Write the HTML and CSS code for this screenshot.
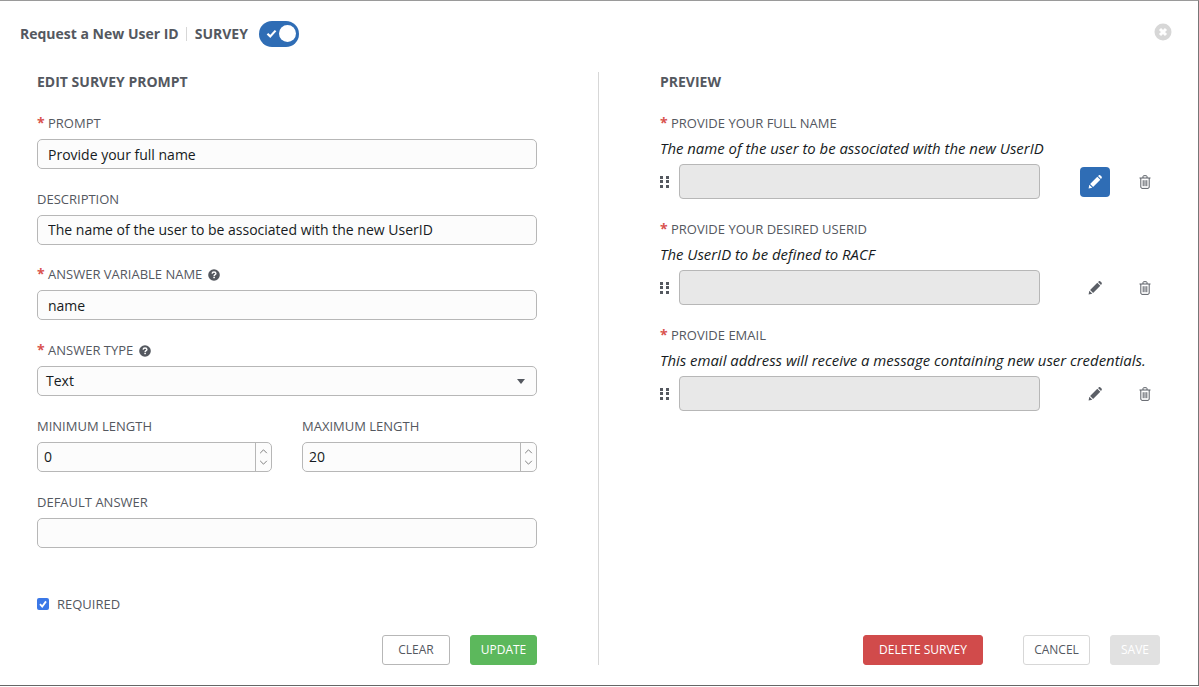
FILE: index.html
```html
<!DOCTYPE html>
<html lang="en">
<head>
  <meta charset="UTF-8" />
  <title>Request a New User ID | Survey</title>
  <link rel="stylesheet" href="styles.css">
</head>
<body>
  <div class="modal">
    <header class="modal-head">
      <span class="modal-title">Request a New User ID</span>
      <span class="title-sep"></span>
      <span class="modal-title">SURVEY</span>
      <span class="toggle">
        <svg class="toggle-check" viewBox="0 0 12 10"><path d="M1.5 5.2 4.6 8.2 10.5 1.8" fill="none" stroke="#fff" stroke-width="2.4"/></svg>
        <span class="toggle-knob"></span>
      </span>
      <svg class="close-icon" viewBox="0 0 18 18">
        <circle cx="9" cy="9" r="8.5" fill="#d7d7d7"/>
        <path d="M6 6 12 12M12 6 6 12" stroke="#fff" stroke-width="3"/>
      </svg>
    </header>

    <div class="columns">
      <!-- survey prompt form -->
      <section class="col-left">
        <h2 class="section-title">EDIT SURVEY PROMPT</h2>

        <div class="field">
          <label class="field-label"><span class="req">*</span> PROMPT</label>
          <input class="text-input" type="text" value="Provide your full name" />
        </div>
        <div class="field">
          <label class="field-label">DESCRIPTION</label>
          <input class="text-input" type="text" value="The name of the user to be associated with the new UserID" />
        </div>
        <div class="field">
          <label class="field-label"><span class="req">*</span> ANSWER VARIABLE NAME
            <svg class="help-icon" viewBox="0 0 12 12"><circle cx="6" cy="6" r="5.8" fill="#54585f"/><path d="M4.1 4.6C4.2 3.5 5 3 6 3S7.9 3.6 7.9 4.5C7.9 5.7 6.1 5.7 6.1 7" fill="none" stroke="#fff" stroke-width="1.4"/><rect x="5.3" y="7.7" width="1.6" height="1.5" fill="#fff"/></svg>
          </label>
          <input class="text-input" type="text" value="name" />
        </div>
        <div class="field">
          <label class="field-label"><span class="req">*</span> ANSWER TYPE
            <svg class="help-icon" viewBox="0 0 12 12"><circle cx="6" cy="6" r="5.8" fill="#54585f"/><path d="M4.1 4.6C4.2 3.5 5 3 6 3S7.9 3.6 7.9 4.5C7.9 5.7 6.1 5.7 6.1 7" fill="none" stroke="#fff" stroke-width="1.4"/><rect x="5.3" y="7.7" width="1.6" height="1.5" fill="#fff"/></svg>
          </label>
          <div class="select-box">Text<span class="select-arrow"></span></div>
        </div>
        <div class="field-row">
          <div class="field">
            <label class="field-label">MINIMUM LENGTH</label>
            <div class="number-box">
              <span class="number-value">0</span>
              <span class="spinner">
                <svg viewBox="0 0 10 6"><path d="M1 5 5 1 9 5" fill="none" stroke="#666" stroke-width="1"/></svg>
                <svg viewBox="0 0 10 6"><path d="M1 1 5 5 9 1" fill="none" stroke="#666" stroke-width="1"/></svg>
              </span>
            </div>
          </div>
          <div class="field">
            <label class="field-label">MAXIMUM LENGTH</label>
            <div class="number-box">
              <span class="number-value">20</span>
              <span class="spinner">
                <svg viewBox="0 0 10 6"><path d="M1 5 5 1 9 5" fill="none" stroke="#666" stroke-width="1"/></svg>
                <svg viewBox="0 0 10 6"><path d="M1 1 5 5 9 1" fill="none" stroke="#666" stroke-width="1"/></svg>
              </span>
            </div>
          </div>
        </div>
        <div class="field">
          <label class="field-label">DEFAULT ANSWER</label>
          <input class="text-input" type="text" />
        </div>

        <label class="required-row">
          <span class="checkbox">
            <svg viewBox="0 0 12 12"><path d="M3 6.2 5.2 8.6 9 3.4" fill="none" stroke="#fff" stroke-width="1.8"/></svg>
          </span>
          REQUIRED
        </label>

        <div class="button-row">
          <button class="btn btn-clear">CLEAR</button>
          <button class="btn btn-update">UPDATE</button>
        </div>
      </section>

      <!-- live preview of the prompts -->
      <section class="col-right">
        <h2 class="section-title">PREVIEW</h2>

        <div class="preview-item">
          <div class="field-label"><span class="req">*</span> PROVIDE YOUR FULL NAME</div>
          <div class="preview-desc">The name of the user to be associated with the new UserID</div>
          <div class="preview-row">
            <span class="drag-handle"><i></i><i></i><i></i><i></i><i></i><i></i></span>
            <div class="preview-input"></div>
            <span class="icon-btn active">
              <svg class="pencil" viewBox="0 0 14 14"><path d="M0.6 13.4 1.3 9.7 4.3 12.7ZM2.1 8.9 9.3 1.7 12.3 4.7 5.1 11.9ZM10 1 11 0.3C11.5 0 12 0 12.4 0.4L13.6 1.6C14 2 14 2.5 13.7 3L13 4Z" fill="#fff"/></svg>
            </span>
            <svg class="trash" viewBox="0 0 12 14"><path d="M0.5 3H11.5M1.8 3V12C1.8 12.8 2.3 13.4 3 13.4H9C9.7 13.4 10.2 12.8 10.2 12V3M4 3V1.5C4 1 4.3 0.7 4.8 0.7H7.2C7.7 0.7 8 1 8 1.5V3M4.2 5.2V11.2M6 5.2V11.2M7.8 5.2V11.2" fill="none" stroke="#5b5f66" stroke-width="1"/></svg>
          </div>
        </div>

        <div class="preview-item">
          <div class="field-label"><span class="req">*</span> PROVIDE YOUR DESIRED USERID</div>
          <div class="preview-desc">The UserID to be defined to RACF</div>
          <div class="preview-row">
            <span class="drag-handle"><i></i><i></i><i></i><i></i><i></i><i></i></span>
            <div class="preview-input"></div>
            <span class="icon-btn">
              <svg class="pencil" viewBox="0 0 14 14"><path d="M0.6 13.4 1.3 9.7 4.3 12.7ZM2.1 8.9 9.3 1.7 12.3 4.7 5.1 11.9ZM10 1 11 0.3C11.5 0 12 0 12.4 0.4L13.6 1.6C14 2 14 2.5 13.7 3L13 4Z" fill="#5b5f66"/></svg>
            </span>
            <svg class="trash" viewBox="0 0 12 14"><path d="M0.5 3H11.5M1.8 3V12C1.8 12.8 2.3 13.4 3 13.4H9C9.7 13.4 10.2 12.8 10.2 12V3M4 3V1.5C4 1 4.3 0.7 4.8 0.7H7.2C7.7 0.7 8 1 8 1.5V3M4.2 5.2V11.2M6 5.2V11.2M7.8 5.2V11.2" fill="none" stroke="#5b5f66" stroke-width="1"/></svg>
          </div>
        </div>

        <div class="preview-item">
          <div class="field-label"><span class="req">*</span> PROVIDE EMAIL</div>
          <div class="preview-desc">This email address will receive a message containing new user credentials.</div>
          <div class="preview-row">
            <span class="drag-handle"><i></i><i></i><i></i><i></i><i></i><i></i></span>
            <div class="preview-input"></div>
            <span class="icon-btn">
              <svg class="pencil" viewBox="0 0 14 14"><path d="M0.6 13.4 1.3 9.7 4.3 12.7ZM2.1 8.9 9.3 1.7 12.3 4.7 5.1 11.9ZM10 1 11 0.3C11.5 0 12 0 12.4 0.4L13.6 1.6C14 2 14 2.5 13.7 3L13 4Z" fill="#5b5f66"/></svg>
            </span>
            <svg class="trash" viewBox="0 0 12 14"><path d="M0.5 3H11.5M1.8 3V12C1.8 12.8 2.3 13.4 3 13.4H9C9.7 13.4 10.2 12.8 10.2 12V3M4 3V1.5C4 1 4.3 0.7 4.8 0.7H7.2C7.7 0.7 8 1 8 1.5V3M4.2 5.2V11.2M6 5.2V11.2M7.8 5.2V11.2" fill="none" stroke="#5b5f66" stroke-width="1"/></svg>
          </div>
        </div>

        <div class="button-row survey-buttons">
          <button class="btn btn-delete">DELETE SURVEY</button>
          <button class="btn btn-cancel">CANCEL</button>
          <button class="btn btn-save">SAVE</button>
        </div>
      </section>
    </div>
  </div>
</body>
</html>
```

FILE: styles.css
```css
* {
  box-sizing: border-box;
}

html, body {
  height: 100%;
}

body {
  margin: 0;
  font-family: "Open Sans", sans-serif;
  background: #fff;
  color: #54585f;
  overflow: hidden;
}

.modal {
  width: 1199px;
  height: 686px;
  background: #fff;
  border-top: 1px solid #9a9a9a;
  border-right: 1px solid #777;
  border-bottom: 1px solid #666;
  display: flex;
  flex-direction: column;
}

.modal-head {
  height: 65px;
  padding-left: 20px;
  padding-right: 26px;
  display: flex;
  align-items: center;
  flex-shrink: 0;
}

.modal-title {
  font-size: 14px;
  font-weight: 700;
  color: #54585f;
}

.title-sep {
  width: 1px;
  height: 14px;
  margin: 0 8px 0 7px;
  background: #d7d7d7;
}

.toggle {
  width: 40px;
  height: 26px;
  margin-left: 11px;
  padding: 0 3px 0 7px;
  border-radius: 13px;
  background: #2f6db5;
  display: flex;
  align-items: center;
  justify-content: space-between;
}

.toggle-check {
  width: 11px;
  height: 9px;
}

.toggle-knob {
  width: 17px;
  height: 17px;
  border-radius: 50%;
  background: #fff;
}

.close-icon {
  width: 18px;
  height: 18px;
  margin-left: auto;
  margin-top: -3px;
}

.columns {
  flex: 1;
  display: flex;
  align-items: stretch;
  padding-top: 6px;
  padding-bottom: 20px;
  min-height: 0;
}

.col-left {
  width: 599px;
  padding: 0 61px 0 37px;
  border-right: 1px solid #d7d7d7;
  display: flex;
  flex-direction: column;
}

.col-right {
  flex: 1;
  padding: 0 38px 0 61px;
  display: flex;
  flex-direction: column;
}

.section-title {
  margin: 0 0 21px;
  height: 20px;
  font-size: 14px;
  line-height: 20px;
  font-weight: 700;
  color: #54585f;
}

.field {
  height: 75.72px;
  flex-shrink: 0;
}

.field-row {
  display: flex;
  gap: 30px;
}

.field-row .field {
  flex: 1;
}

.field-label {
  display: block;
  height: 20px;
  margin-bottom: 6px;
  font-size: 13px;
  line-height: 20px;
  color: #54585f;
  white-space: nowrap;
}

.req {
  color: #d9534f;
  font-size: 14px;
  font-weight: 700;
}

.help-icon {
  width: 12px;
  height: 12px;
  margin-left: 2px;
  vertical-align: -2px;
}

.text-input,
.select-box,
.number-box {
  width: 100%;
  height: 30px;
  border: 1px solid #b7b7b7;
  border-radius: 5px;
  background: #fcfcfc;
  font-family: inherit;
  font-size: 14px;
  color: #161b22;
}

.text-input {
  display: block;
  padding: 0 10px;
}

.select-box {
  position: relative;
  padding: 0 8px;
  line-height: 28px;
}

.select-arrow {
  position: absolute;
  right: 11px;
  top: 12px;
  border-left: 4px solid transparent;
  border-right: 4px solid transparent;
  border-top: 5px solid #54585f;
}

.number-box {
  display: flex;
  align-items: stretch;
}

.number-value {
  flex: 1;
  padding-left: 6px;
  line-height: 28px;
}

.spinner {
  width: 16px;
  border-left: 1px solid #b7b7b7;
  display: flex;
  flex-direction: column;
  align-items: center;
  justify-content: center;
  gap: 6px;
}

.spinner svg {
  width: 9px;
  height: 5px;
}

.required-row {
  margin-top: 27px;
  height: 20px;
  display: flex;
  align-items: center;
  gap: 8px;
  font-size: 13px;
  color: #54585f;
  flex-shrink: 0;
}

.checkbox {
  width: 12px;
  height: 12px;
  border-radius: 2px;
  background: #3b78e7;
  display: flex;
}

.button-row {
  margin-top: auto;
  display: flex;
  justify-content: flex-end;
  gap: 20px;
}

.survey-buttons {
  gap: 0;
}

.btn {
  height: 30px;
  padding: 0 0 2px;
  border: 1px solid #b7b7b7;
  border-radius: 3px;
  background: #fff;
  font-family: inherit;
  font-size: 12px;
  color: #54585f;
}

.btn-clear {
  width: 68px;
}

.btn-update {
  width: 67px;
  background: #5cb85c;
  border-color: #5cb85c;
  color: #fff;
}

.btn-delete {
  width: 120px;
  background: #d14b4b;
  border-color: #d14b4b;
  color: #fff;
}

.btn-cancel {
  width: 67px;
  margin-left: 40px;
  border-color: #d7d7d7;
}

.btn-save {
  width: 50px;
  margin-left: 20px;
  background: #e1e1e1;
  border-color: #e1e1e1;
  color: #fff;
}

.preview-item {
  height: 106px;
  flex-shrink: 0;
}

.preview-item .field-label {
  margin-bottom: 0;
}

.preview-desc {
  height: 21px;
  margin: 5px 0;
  font-size: 14.9px;
  line-height: 21px;
  font-style: italic;
  color: #161b22;
  white-space: nowrap;
}

.preview-row {
  display: flex;
  align-items: center;
  height: 35px;
}

.drag-handle {
  width: 9px;
  margin-right: 10px;
  display: grid;
  grid-template-columns: 3px 3px;
  column-gap: 3px;
  row-gap: 1.5px;
}

.drag-handle i {
  width: 3px;
  height: 3px;
  background: #54585f;
}

.preview-input {
  width: 361px;
  height: 35px;
  border: 1px solid #b7b7b7;
  border-radius: 4px;
  background: #e8e8e8;
}

.icon-btn {
  width: 30px;
  height: 30px;
  margin-left: 40px;
  border-radius: 4px;
  display: flex;
  align-items: center;
  justify-content: center;
}

.icon-btn.active {
  background: #2f6db5;
}

.pencil {
  width: 14px;
  height: 14px;
  margin-right: 1px;
}

.trash {
  width: 12px;
  height: 14px;
  margin-left: 29px;
}
```
